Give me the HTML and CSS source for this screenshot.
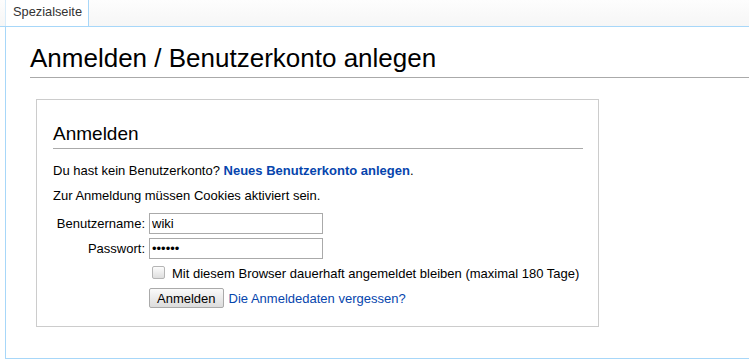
FILE: index.html
```html
<!DOCTYPE html>
<html lang="de">
<head>
<meta charset="utf-8">
<title>Anmelden</title>
<link rel="stylesheet" href="styles.css">
</head>
<body>
<div class="tabbar">
  <div class="tab">Spezialseite</div>
</div>
<div class="content">
  <h1 class="title">Anmelden / Benutzerkonto anlegen</h1>
  <div class="loginbox">
    <h2 class="subtitle">Anmelden</h2>
    <p class="para">Du hast kein Benutzerkonto? <a class="link strong" href="#">Neues Benutzerkonto anlegen</a>.</p>
    <p class="para">Zur Anmeldung müssen Cookies aktiviert sein.</p>
    <form class="form">
      <label class="lbl" for="u">Benutzername:</label>
      <input class="field" id="u" type="text" value="wiki">
      <label class="lbl" for="p">Passwort:</label>
      <input class="field" id="p" type="password" value="secret">
      <div class="spacer"></div>
      <label class="remember"><span class="check"></span>Mit diesem Browser dauerhaft angemeldet bleiben (maximal 180 Tage)</label>
      <div class="spacer"></div>
      <div class="actions"><button class="btn" type="button">Anmelden</button><a class="link" href="#">Die Anmeldedaten vergessen?</a></div>
    </form>
  </div>
</div>
</body>
</html>
```
FILE: styles.css
```css
html, body {
  margin: 0;
  padding: 0;
  background: #fff;
  font-family: "Liberation Sans", Arial, sans-serif;
  color: #000;
}
.tabbar {
  height: 26px;
  background: linear-gradient(#fdfdfd, #f6f6f6);
  border-bottom: 1px solid #a7d7f9;
  display: flex;
  padding-left: 5px;
}
.tab {
  width: 75px;
  height: 26px;
  padding-left: 7px;
  background: #fff;
  border-left: 1px solid #d8ecfa;
  border-right: 1px solid #a7d7f9;
  margin-bottom: -1px;
  font-size: 12.8px;
  color: #333;
  line-height: 24px;
}
.content {
  margin-left: 5px;
  border-left: 1px solid #a7d7f9;
  border-bottom: 1px solid #a7d7f9;
  padding: 13px 0 31px 24px;
  font-size: 13px;
}
.title {
  margin: 0;
  font-weight: normal;
  font-size: 26px;
  line-height: 37px;
  border-bottom: 1px solid #aaa;
  margin-bottom: 21px;
}
.loginbox {
  margin-left: 6px;
  width: 530px;
  border: 1px solid #ccc;
  padding: 20px 15px 18px 16px;
}
.subtitle {
  margin: 0;
  font-weight: normal;
  font-size: 19px;
  line-height: 28px;
  border-bottom: 1px solid #aaa;
  margin-bottom: 14px;
}
.para {
  margin: 0 0 10px;
  line-height: 15px;
}
.link {
  color: #0645ad;
  text-decoration: none;
}
.strong {
  font-weight: bold;
}
.form {
  display: grid;
  grid-template-columns: 92px auto;
  column-gap: 4px;
  row-gap: 4px;
  align-items: center;
  margin-top: 1px;
}
.lbl {
  text-align: right;
}
.field {
  width: 168px;
  height: 15px;
  padding: 2px;
  border: 1px solid #aaa;
  font-family: "Liberation Sans", Arial, sans-serif;
  font-size: 13px;
  margin: 0;
  justify-self: start;
}
.remember {
  display: flex;
  align-items: center;
  height: 21px;
  padding-left: 3px;
}
.check {
  width: 11px;
  height: 11px;
  border: 1px solid #b5b5b5;
  border-radius: 2px;
  background: linear-gradient(#fcfcfc, #dedede);
  margin-right: 7px;
  margin-bottom: 3px;
}
.actions {
  display: flex;
  align-items: center;
  gap: 5px;
}
.btn {
  height: 20px;
  padding: 0 7px;
  border: 1px solid #aaa;
  border-radius: 2px;
  background: linear-gradient(#fafafa, #dcdcdc);
  font-family: "Liberation Sans", Arial, sans-serif;
  font-size: 13px;
  color: #000;
  margin: 0;
}
```
